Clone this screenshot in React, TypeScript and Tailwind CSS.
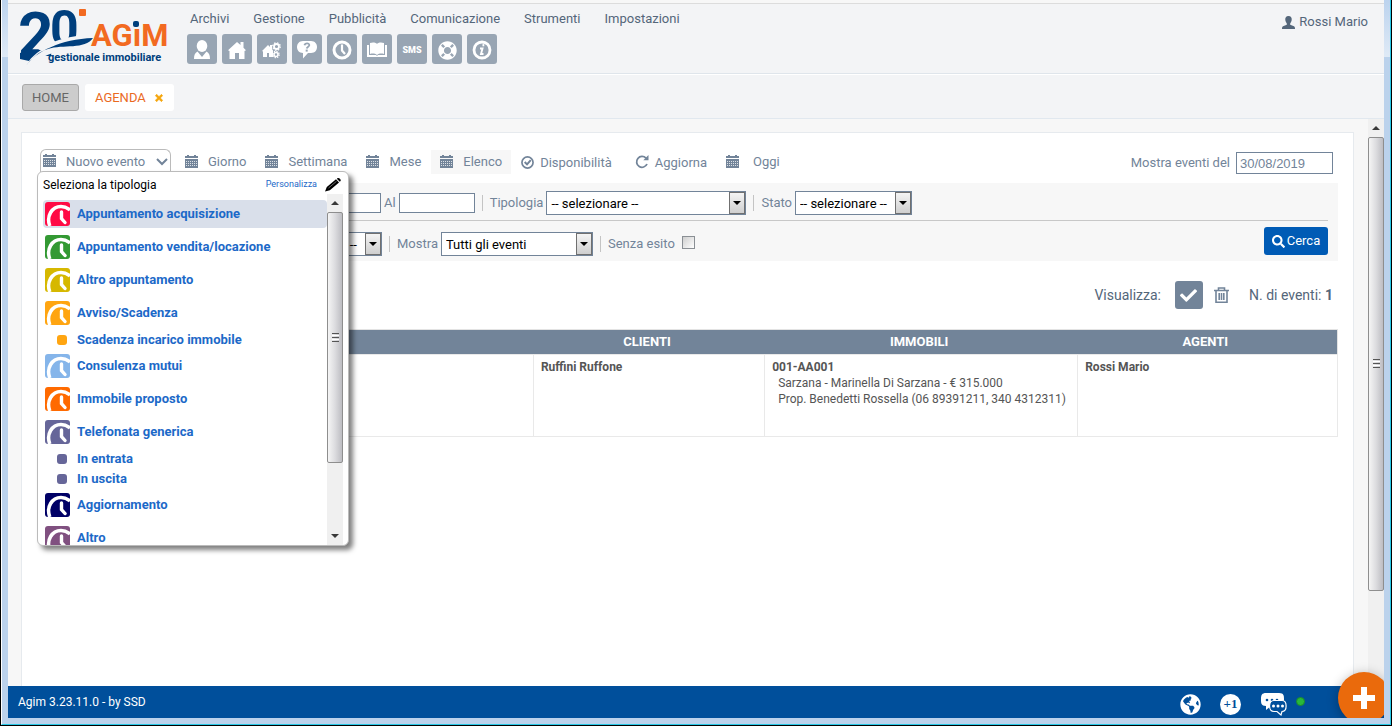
import React from "react";
import {
  FaCheck,
  FaGlobeAmericas,
  FaLifeRing,
  FaSearch,
  FaTimes,
} from "react-icons/fa";

const menu = ["Archivi", "Gestione", "Pubblicità", "Comunicazione", "Strumenti", "Impostazioni"];

type EventType = { label: string; color: string; sub?: boolean };

const eventTypes: EventType[] = [
  { label: "Appuntamento acquisizione", color: "#ff0a45" },
  { label: "Appuntamento vendita/locazione", color: "#339933" },
  { label: "Altro appuntamento", color: "#d6b800" },
  { label: "Avviso/Scadenza", color: "#ffa511" },
  { label: "Scadenza incarico immobile", color: "#ffa511", sub: true },
  { label: "Consulenza mutui", color: "#85b5ea" },
  { label: "Immobile proposto", color: "#ff6a00" },
  { label: "Telefonata generica", color: "#666699" },
  { label: "In entrata", color: "#666699", sub: true },
  { label: "In uscita", color: "#666699", sub: true },
  { label: "Aggiornamento", color: "#000066" },
  { label: "Altro", color: "#805080" },
];

function Logo() {
  return (
    <svg width="152" height="62" viewBox="0 0 152 62" role="img" aria-label="20 Agim gestionale immobiliare" fontFamily="Roboto,sans-serif" fontWeight="700">
      <g fill="#003f7d">
        <text x="-1" y="50" fontSize="62">2</text>
        <text x="31" y="40" fontSize="50">0</text>
      </g>
      <path d="M5 60 C14 42 40 29 75 29 L73 40 C46 41 24 48 8 61Z" fill="#f3f4f6" />
      <path d="M1 53 V47 L9 44 H22 C16 48 12 52 10 55Z" fill="#003f7d" />
      <path d="M7 60 C16 46 42 33 74 32 C66 44 44 38 29 43 C19 46 13 52 7 60Z" fill="#003f7d" />
      <rect x="60" y="3" width="7" height="7" rx="1" fill="#f26a21" />
      <text x="72" y="40" fontSize="31" fill="#f26a21">
        AGıM
      </text>
      <rect x="114" y="15" width="6" height="6" rx="2" fill="#003f7d" />
      <text x="29" y="55" fontSize="11" fill="#003f7d">
        gestionale immobiliare
      </text>
    </svg>
  );
}

function UserGlyph() {
  return (
    <svg width="18" height="20" viewBox="0 0 18 20" fill="currentColor">
      <ellipse cx="9" cy="6" rx="5.3" ry="6" />
      <path d="M4.5 11.5 9 17l4.500-5.500C16 13 17 15 17 19H1c0-4 1-6 3.500-7.500Z" />
    </svg>
  );
}

function HomeGlyph() {
  return (
    <svg width="18" height="18" viewBox="0 0 18 18" fill="currentColor">
      <path d="M9 1 12.500 4V1H15.500V6.700L18 9.300 16.500 10V18H11V12H7V18H1.500V10L0 9.300Z" />
    </svg>
  );
}

function HomeGearsGlyph() {
  return (
    <svg width="20" height="18" viewBox="0 0 20 18" fill="currentColor">
      <path d="M0 10 6 4l2 2V4h2v4l1 1.500V16H7v-4H5v4H1v-5.500Z" />
      <g fill="none" stroke="currentColor">
        <circle cx="14.500" cy="5.500" r="2.500" strokeWidth="1.800" />
        <circle cx="14.500" cy="5.500" r="3.800" strokeWidth="1.200" strokeDasharray="1.500 1.480" />
        <circle cx="14" cy="13.500" r="2" strokeWidth="1.600" />
        <circle cx="14" cy="13.500" r="3.200" strokeWidth="1.200" strokeDasharray="1.300 1.210" />
      </g>
    </svg>
  );
}

function QuestionGlyph() {
  return (
    <svg width="20" height="18" viewBox="0 0 20 18">
      <path d="M6 0h8c8 0 8 12 0 12h-3l-5 5.500V12C-2 12-2 0 6 0Z" fill="currentColor" />
      <path d="M7.500 4.200C8 1.800 12.500 1.800 12.300 4.200 12.200 5.700 10 5.600 9.700 7.500" fill="none" stroke="#98a5b3" strokeWidth="1.800" />
      <rect x="8.700" y="8.600" width="2" height="2" fill="#98a5b3" />
    </svg>
  );
}

function ClockGlyph() {
  return (
    <svg width="20" height="20" viewBox="0 0 20 20" fill="none" stroke="currentColor">
      <circle cx="10" cy="10" r="8" strokeWidth="3" />
      <path d="M10 4.500v6l3 3.500" strokeWidth="2.200" />
    </svg>
  );
}

function BookGlyph() {
  return (
    <svg width="20" height="16" viewBox="0 0 20 16">
      <path d="M0 3h2v10h7l1 1 1-1h7V3h2v12H0Z" fill="currentColor" />
      <path d="M3 1c3-1 5-.6 7 .8C12 .400 14 0 17 1v11c-3-.8-5-.4-7 1-2-1.400-4-1.800-7-1Z" fill="currentColor" />
    </svg>
  );
}

function InfoGlyph() {
  return (
    <svg width="20" height="20" viewBox="0 0 20 20" fill="none" stroke="currentColor">
      <circle cx="10" cy="10" r="8" strokeWidth="2.800" />
      <path d="M8 8.500h2.500L9 14h2.500" strokeWidth="1.900" />
      <path d="M10.500 5.200h1.800" strokeWidth="2.200" />
    </svg>
  );
}

function CalendarGlyph() {
  return (
    <svg width="13" height="13" viewBox="0 0 13 13" shapeRendering="crispEdges" className="mb-0.5 shrink-0">
      <path d="M0 1h2V0h2v1h5V0h2v1h2v2H0ZM0 4h13v9H0Z" fill="#728499" />
      <path d="M1 6.500h11M1 8.500h11M1 10.500h11" stroke="#fff" strokeOpacity=".75" strokeWidth="1" strokeDasharray="1 1" />
    </svg>
  );
}

function PencilGlyph() {
  return (
    <svg width="16" height="14" viewBox="0 0 16 14">
      <path d="M0 13.500 1.800 9 11 1.300l3 3.200-9.200 7.700Z" />
      <path d="m11.800.7 1-.6c1.500-.4 3.200 1.400 2.900 2.700l-.9 1Z" />
      <path d="m3.500 10 8-6.700" stroke="#999" strokeWidth=".7" />
    </svg>
  );
}

function TypeClock({ color }: { color: string }) {
  return (
    <svg width="25" height="24" viewBox="0 0 25 24" className="shrink-0">
      <path d="M3 0h19a3 3 0 0 1 3 3v18a3 3 0 0 1-3 3H3a3 3 0 0 1-3-3V3a3 3 0 0 1 3-3Z" fill={color} />
      <path d="M4.800 24C1 14 7 4.500 16 4.500c3.500 0 6 1 9 3.500" fill="none" stroke="#fff" strokeWidth="3.500" />
      <path d="M16.500 10V16.500l3.500 4" fill="none" stroke="#fff" strokeWidth="3.400" strokeLinecap="round" />
    </svg>
  );
}

function ScrollArrow({ down }: { down?: boolean }) {
  return (
    <svg width="8" height="4" viewBox="0 0 8 4" fill="#3a3a3a">
      {down ? <path d="M0 0h8L4 4Z" /> : <path d="M0 4h8L4 0Z" />}
    </svg>
  );
}

function ScrollThumb() {
  return (
    <div className="flex w-full flex-1 items-center justify-center rounded-xs border border-[#8e8e8e] bg-linear-to-r from-[#f5f5f5] via-[#dcdcdf] to-[#bdbdc2]">
      <div className="flex flex-col gap-px">
        <i className="h-px w-[7px] bg-[#555]" />
        <i className="h-px w-[7px] bg-white" />
        <i className="h-px w-[7px] bg-[#555]" />
        <i className="h-px w-[7px] bg-white" />
        <i className="h-px w-[7px] bg-[#555]" />
      </div>
    </div>
  );
}

function ToolButton({ label, active }: { label: string; active?: boolean }) {
  return (
    <button className={active ? "flex h-6 items-center gap-2.5 bg-[#f7f7f7] px-[9px]" : "flex h-6 items-center gap-2.5 px-[9px]"}>
      <CalendarGlyph />
      <span>{label}</span>
    </button>
  );
}

type SelectProps = { id: string; value: string; width: string; label?: string };

function SelectBox({ id, value, width, label }: SelectProps) {
  return (
    <div className={`relative ${width}`}>
      <select id={id} aria-label={label} className="h-6 w-full appearance-none border border-[#728499] bg-white pt-0.5 pl-1 text-[13px] leading-4 text-black">
        <option>{value}</option>
      </select>
      <span className="pointer-events-none absolute inset-y-px right-px flex w-4 items-center justify-center border border-[#707070] bg-linear-to-b from-[#f4f4f4] to-[#cfcfcf]">
        <svg width="8" height="4" viewBox="0 0 8 4">
          <path d="M0 0h8L4 4Z" />
        </svg>
      </span>
    </div>
  );
}

const Separator = () => <i className="h-4 w-px bg-[#c4c4c4]" />;

function TypeMenu() {
  return (
    <div className="absolute top-[22px] -left-[3px] z-20 flex h-[375px] w-[312px] flex-col overflow-hidden rounded-md border border-[#bbb] bg-white shadow-[4px_4px_5px_rgba(0,0,0,0.5)]">
      <div className="flex h-[26px] shrink-0 items-center justify-between pr-[7px] pl-[5px]">
        <span className="text-xs text-black">Seleziona la tipologia</span>
        <a href="#personalizza" className="flex items-center gap-2 text-[9px] text-[#1c69c8]">
          Personalizza
          <PencilGlyph />
        </a>
      </div>
      <div className="flex min-h-0 flex-1 pr-[5px] pl-[5px]">
        <ul className="min-w-0 flex-1 overflow-hidden text-[13px] font-bold text-[#1c69c8]">
          {eventTypes.map((t, i) =>
            t.sub ? (
              <li key={t.label}>
                <button className="flex h-5 w-full items-center gap-2.5 pl-3.5">
                  <svg width="10" height="10" viewBox="0 0 10 10">
                    <rect width="10" height="10" rx="3" fill={t.color} />
                  </svg>
                  {t.label}
                </button>
              </li>
            ) : (
              <li key={t.label} className="flex h-[33px] items-start pt-0.5">
                <button
                  className={
                    i === 0
                      ? "flex h-7 w-full items-center gap-[7px] rounded-sm bg-[#d9dfea] pl-0.5"
                      : "flex h-7 w-full items-center gap-[7px] pl-0.5"
                  }
                >
                  <TypeClock color={t.color} />
                  {t.label}
                </button>
              </li>
            ),
          )}
        </ul>
        <div className="-mt-1 flex w-4 flex-col items-center bg-[#f0f0f0]">
          <span className="flex h-[18px] items-center">
            <ScrollArrow />
          </span>
          <div className="flex h-[251px] w-full">
            <ScrollThumb />
          </div>
          <span className="mt-auto flex h-[18px] items-center">
            <ScrollArrow down />
          </span>
        </div>
      </div>
    </div>
  );
}

export default function App() {
  const quick: [string, React.ReactNode][] = [
    ["Clienti", <UserGlyph />],
    ["Immobili", <HomeGlyph />],
    ["Gestione immobili", <HomeGearsGlyph />],
    ["Richieste", <QuestionGlyph />],
    ["Agenda", <ClockGlyph />],
    ["Rubrica", <BookGlyph />],
    ["SMS", <span className="text-[9px] leading-none font-black">SMS</span>],
    ["Assistenza", <FaLifeRing size={19} />],
    ["Informazioni", <InfoGlyph />],
  ];

  return (
    <div className="flex h-screen flex-col border-x border-b border-black bg-black font-['Roboto',sans-serif]">
      <div className="flex min-h-0 flex-1 flex-col border-r border-b border-l border-r-[#27c8e6] border-b-[#27c8e6] border-l-white bg-[#bbd2ec] bg-[linear-gradient(#bcd3ee,#dfeaf6)] bg-[length:100%_57px] bg-no-repeat px-1.5 pb-[6px]">
        <div className="relative flex min-h-0 flex-1 flex-col overflow-hidden bg-[#f7f7f7]">
          <header className="mt-[3px] flex h-[71px] shrink-0 items-start border-t border-b border-t-[#dcdcdc] border-b-[#dfe5eb] bg-[#f3f4f6] pr-4 pl-[11px] text-[13px] text-[#54667a]">
            <div className="mt-0.5 w-[152px]">
              <Logo />
            </div>
            <div className="ml-4 pt-[5px]">
              <nav className="flex gap-6 pl-[3px] leading-5">
                {menu.map((m) => (
                  <a key={m} href={`#${m.toLowerCase()}`}>
                    {m}
                  </a>
                ))}
              </nav>
              <div className="mt-[5px] flex gap-[5px]">
                {quick.map(([label, icon]) => (
                  <button
                    key={label}
                    aria-label={label}
                    className="flex size-[30px] items-center justify-center rounded-[3px] bg-[#98a5b3] pt-0.5 text-white"
                  >
                    {icon}
                  </button>
                ))}
              </div>
            </div>
            <a href="#profilo" className="mt-2 ml-auto flex items-center gap-1 leading-5">
              <svg width="13" height="13" viewBox="0 0 13 13" fill="currentColor">
                <path d="M6.500 0C9 0 10 1.700 9.700 4 9.500 5.700 8.700 6.500 8.200 7.500v1.200L12 10.200c.8.400 1 1.500 1 2.800H0c0-1.300.2-2.400 1-2.800l3.800-1.500V7.500C4.300 6.500 3.500 5.700 3.300 4 3 1.700 4 0 6.500 0Z" />
              </svg>
              Rossi Mario
            </a>
          </header>

          <div className="flex h-[45px] shrink-0 items-center gap-1.5 border-t border-b border-t-white border-b-[#e1e8ef] bg-[#f3f4f6] pt-0.5 pl-3.5 text-[13px]">
            <button className="h-[27px] rounded-[3px] border border-[#a9a9a9] bg-[#cccccc] px-[9px] text-[#666]">HOME</button>
            <button className="flex h-[27px] items-center gap-2 rounded-[3px] bg-white px-2.5 text-[#ea6a1f]">
              AGENDA
              <FaTimes size={10} className="text-[#f5a50c]" stroke="currentColor" strokeWidth={40} />
            </button>
          </div>

          <div className="flex min-h-0 flex-1">
            <main className="min-w-0 flex-1 pt-[13px] pr-3.5 pl-[13px]">
              <section className="h-full border border-b-0 border-[#e6eaee] bg-white pt-4 pr-[15px] pl-4 text-[13px] text-[#728499]">
                <div className="flex h-[34px] items-start">
                  <div className="relative ml-0.5">
                    <button className="flex h-[23px] w-[131px] items-center rounded-t-md border border-b-0 border-[#bbb] pt-px pr-[2px] pl-[2px]">
                      <CalendarGlyph />
                      <span className="ml-2.5">Nuovo evento</span>
                      <svg width="12" height="8" viewBox="0 0 12 8" className="ml-auto" fill="none" stroke="#728499" strokeWidth="2">
                        <path d="m1 1 5 5 5-5" />
                      </svg>
                    </button>
                    <TypeMenu />
                  </div>
                  <div className="mt-px ml-[5px] flex gap-px">
                    <ToolButton label="Giorno" />
                    <ToolButton label="Settimana" />
                    <ToolButton label="Mese" />
                    <ToolButton label="Elenco" active />
                    <button className="flex h-6 items-center gap-1.5 px-[9px] pt-0.5">
                      <svg width="13" height="13" viewBox="0 0 14 14" fill="none" stroke="#728499" className="mb-0.5">
                        <circle cx="7" cy="7" r="6" strokeWidth="1.800" />
                        <path d="m4 6.500 2.500 2.500L10.500 4.500" strokeWidth="2.200" />
                      </svg>
                      Disponibilità
                    </button>
                    <button className="ml-1 flex h-6 items-center gap-1.5 px-[9px] pt-0.5">
                      <svg width="14" height="14" viewBox="0 0 14 14" fill="none" stroke="#728499" strokeWidth="1.800" className="mb-0.5">
                        <path d="M12 9A5.400 5.400 0 1 1 11 3.200" />
                        <path d="M13.500 0v5.200H8.300Z" fill="#728499" stroke="none" />
                      </svg>
                      Aggiorna
                    </button>
                    <button className="flex h-6 items-center gap-3.5 px-[9px]">
                      <CalendarGlyph />
                      Oggi
                    </button>
                  </div>
                  <div className="mt-[3px] mr-[5px] ml-auto flex items-center gap-1.5">
                    <label htmlFor="mostra-dal">Mostra eventi del</label>
                    <input
                      id="mostra-dal"
                      defaultValue="30/08/2019"
                      className="h-[22px] w-[97px] border border-[#728499] bg-white px-[3px] font-['Liberation_Sans',sans-serif] text-[13px]"
                    />
                  </div>
                </div>

                <form className="h-[78px] bg-[#f7f7f7] pr-2.5 pl-2.5" onSubmit={(e) => e.preventDefault()}>
                  <div className="flex h-[38px] items-center gap-[3px] border-b border-[#c8c8c8] pt-[3px] pl-[257px]">
                    <input aria-label="Dal" className="h-5 w-[76px] border border-[#728499] bg-white px-1" />
                    <label htmlFor="al">Al</label>
                    <input id="al" className="mr-1 h-5 w-[76px] border border-[#728499] bg-white px-1" />
                    <Separator />
                    <label htmlFor="tipologia" className="ml-1">Tipologia</label>
                    <SelectBox id="tipologia" value="-- selezionare --" width="w-[200px] mr-1" />
                    <Separator />
                    <label htmlFor="stato" className="ml-1">Stato</label>
                    <SelectBox id="stato" value="-- selezionare --" width="w-[117px]" />
                  </div>
                  <div className="flex h-10 items-center pl-[217px]">
                    <div className="mt-[5px] flex items-center gap-[3px]">
                      <SelectBox id="agente" label="Agente" value="-- selezionare --" width="w-[117px] mr-1" />
                      <Separator />
                      <label htmlFor="mostra" className="ml-1">Mostra</label>
                      <SelectBox id="mostra" value="Tutti gli eventi" width="w-[152px] mr-1" />
                      <Separator />
                      <label htmlFor="senza" className="ml-1">Senza esito</label>
                      <input
                        id="senza"
                        type="checkbox"
                        className="mb-0.5 ml-1 size-[13px] appearance-none border border-[#8a8f94] bg-linear-to-br from-[#cfcfcf] to-white"
                      />
                    </div>
                    <button className="ml-auto flex h-7 w-16 items-center justify-center gap-0.5 rounded-[3px] bg-[#005bb5] text-white">
                      <FaSearch size={13} />
                      Cerca
                    </button>
                  </div>
                </form>

                <div className="mt-5 flex items-center justify-end pr-[5px] text-sm text-[#54667a]">
                  <span>Visualizza:</span>
                  <button aria-label="Seleziona" className="ml-3.5 flex size-7 items-center justify-center rounded-[3px] bg-[#728499] text-white">
                    <FaCheck size={17} />
                  </button>
                  <button aria-label="Elimina" className="ml-[11px] text-[#728499]">
                    <svg width="15" height="17" viewBox="0 0 15 17" fill="none" stroke="currentColor" strokeWidth="1.600">
                      <path d="M0 3.500h15M4.500 3V1h6v2M2 4v11.200h11V4M5.200 6v7M7.500 6v7M9.800 6v7" />
                    </svg>
                  </button>
                  <span className="ml-5">
                    N. di eventi: <b>1</b>
                  </span>
                </div>

                <table className="mt-5 w-full table-fixed border-collapse border border-[#e3e3e3] text-xs text-[#555]">
                  <colgroup>
                    <col className="w-[38.1%]" />
                    <col className="w-[17.8%]" />
                    <col className="w-[24.1%]" />
                    <col className="w-[20%]" />
                  </colgroup>
                  <thead>
                    <tr className="h-[25px] bg-[#728499] text-[13px] text-white">
                      <th aria-label="Evento" />
                      <th className="pr-1">CLIENTI</th>
                      <th className="pr-1">IMMOBILI</th>
                      <th className="pr-1">AGENTI</th>
                    </tr>
                  </thead>
                  <tbody>
                    <tr className="h-[82px] align-top leading-4">
                      <td className="border border-[#e9e9e9]" />
                      <td className="border border-[#e9e9e9] px-[7px] pt-1 font-bold">Ruffini Ruffone</td>
                      <td className="border border-[#e9e9e9] px-[7px] pt-1">
                        <b>001-AA001</b>
                        <p className="pl-1.5 whitespace-nowrap">Sarzana - Marinella Di Sarzana - € 315.000</p>
                        <p className="pl-1.5 whitespace-nowrap">Prop. Benedetti Rossella (06 89391211, 340 4312311)</p>
                      </td>
                      <td className="border border-[#e9e9e9] px-[7px] pt-1 font-bold">Rossi Mario</td>
                    </tr>
                  </tbody>
                </table>
              </section>
            </main>

            <div className="flex w-4 shrink-0 flex-col items-center bg-[#f0f0f0]">
              <span className="flex h-[18px] items-center">
                <ScrollArrow />
              </span>
              <div className="flex h-4/5 w-full">
                <ScrollThumb />
              </div>
            </div>
          </div>

          <footer className="flex h-8 shrink-0 items-center bg-[#004f9b] pr-[79px] pl-2.5 text-xs text-white">
            <span>Agim 3.23.11.0 - by SSD</span>
            <div className="mt-1 ml-auto flex items-center">
              <FaGlobeAmericas size={21} />
              <span className="ml-[19px] flex size-[21px] items-center justify-center rounded-full bg-white font-['Liberation_Serif',serif] text-[13px] font-bold text-[#004f9b]">
                +1
              </span>
              <span className="ml-5">
                <svg width="27" height="23" viewBox="0 0 27 23">
                  <path d="M5 0h13c5 0 5 3 5 6 0 5-1 7-6 7h-7l-5 4v-4C0 13 0 10 0 6s1-6 5-6Z" fill="#fff" />
                  <g fill="#004f9b">
                    <circle cx="6" cy="7" r="1.300" />
                    <circle cx="11" cy="7" r="1.300" />
                    <circle cx="16" cy="7" r="1.300" />
                  </g>
                  <path
                    d="M13 7.500h8c5.500 0 5.500 11 0 11l-1 3.500-4-3.500h-3c-6 0-6-11 0-11Z"
                    fill="#004f9b"
                    stroke="#fff"
                    strokeWidth="1.200"
                  />
                  <g fill="#fff">
                    <circle cx="12.500" cy="13" r="1.500" />
                    <circle cx="17" cy="13" r="1.500" />
                    <circle cx="21.500" cy="13" r="1.500" />
                  </g>
                </svg>
              </span>
              <i className="mb-1.5 ml-2 size-[9px] rounded-full border border-[#1c8a2c] bg-[#27b83a]" />
            </div>
          </footer>

          <button
            aria-label="Aggiungi"
            className="absolute -right-1.5 -bottom-1.5 z-30 flex size-[52px] items-center justify-center rounded-full bg-[#ea6a0c] text-white shadow-[0_2px_12px_rgba(0,0,0,0.3)]"
          >
            <svg width="22" height="22" viewBox="0 0 22 22" stroke="currentColor" strokeWidth="6">
              <path d="M11 0v22M0 11h22" />
            </svg>
          </button>
        </div>
      </div>
    </div>
  );
}
